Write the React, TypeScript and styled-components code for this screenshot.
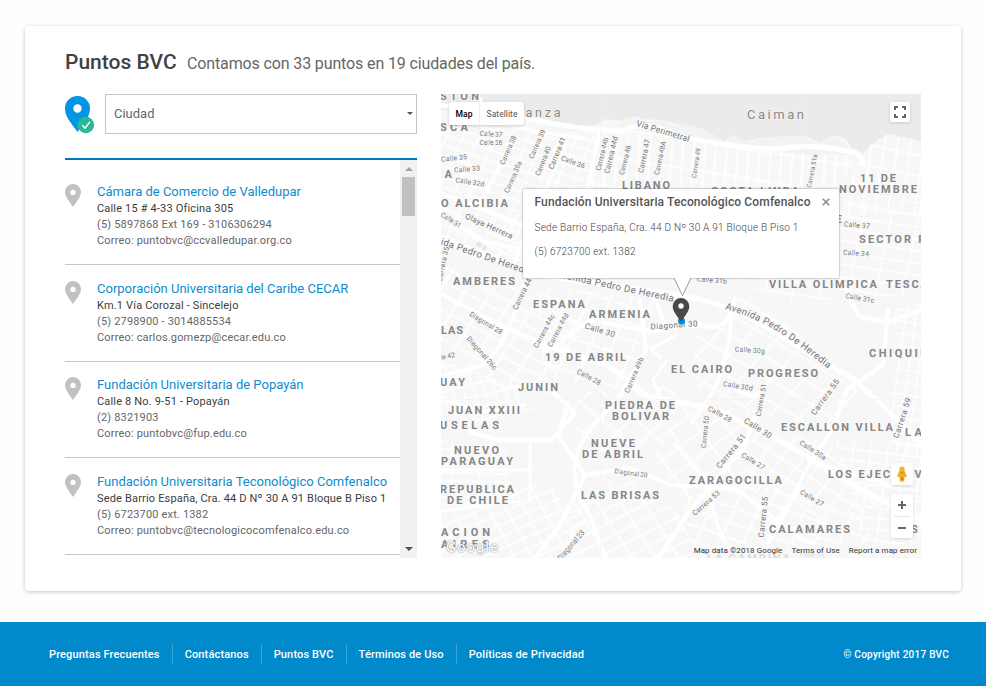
import React from "react";
import styled, { createGlobalStyle } from "styled-components";

const GlobalStyle = createGlobalStyle`
  * { box-sizing: border-box; }
  body { margin: 0; background: #fff; font-family: Roboto, "Liberation Sans", sans-serif; color: #666; }
  h1, h2, h3, p, ul { margin: 0; padding: 0; font-weight: 400; }
  button { font-family: inherit; border: 0; padding: 0; }
`;

const Page = styled.div`
  width: 986px;
  height: 687px;
  overflow: hidden;
  padding-top: 26px;
  background: #fefefe;
`;
const Card = styled.main`
  width: 936px;
  height: 565px;
  margin-left: 25px;
  padding: 22px 40px 0;
  background: #fff;
  border-radius: 4px;
  box-shadow: 0 1px 4px rgba(0, 0, 0, 0.22);
`;
const Heading = styled.header`
  display: flex;
  align-items: baseline;
  height: 46px;
  line-height: 28px;
`;
const Title = styled.h1`
  width: 122px;
  font-size: 21px;
  font-weight: 500;
  color: #414141;
  white-space: nowrap;
`;
const Summary = styled.p`
  font-size: 16px;
  letter-spacing: -0.13px;
`;
const Columns = styled.div`
  display: flex;
  gap: 24px;
`;
const Sidebar = styled.section`
  width: 352px;
`;
const Filter = styled.div`
  display: flex;
  height: 64px;
`;
const FilterPin = styled.div`
  width: 40px;
  padding-top: 2px;
`;
const Select = styled.button`
  display: flex;
  align-items: center;
  justify-content: space-between;
  width: 312px;
  height: 40px;
  padding: 0 3px 1px 8px;
  background: #fff;
  border: 1px solid #c4c4c4;
  font-size: 13px;
  color: #666;
`;
const Caret = styled.span<{ $up?: boolean; $color: string }>`
  width: 0;
  height: 0;
  border-left: 4px solid transparent;
  border-right: 4px solid transparent;
  border-top: ${(p) => (p.$up ? "0" : `4px solid ${p.$color}`)};
  border-bottom: ${(p) => (p.$up ? `4px solid ${p.$color}` : "0")};
`;
const SelectCaret = styled(Caret)`
  border-left-width: 3px;
  border-right-width: 3px;
  border-top-width: 3px;
`;
const ListFrame = styled.div`
  display: flex;
  height: 400px;
  border-top: 2px solid #0078c1;
`;
const List = styled.ul`
  width: 335px;
  padding-top: 8.4px;
  list-style: none;
`;
const Item = styled.li`
  display: flex;
  height: 96.6px;
  padding-top: 14.6px;
  border-bottom: 1px solid #c6c6c6;
`;
const ItemPin = styled.div`
  width: 32px;
  padding-top: 1px;
`;
const ItemBody = styled.div`
  white-space: nowrap;
`;
const ItemName = styled.h2`
  margin-bottom: 1px;
  font-size: 13px;
  line-height: 17px;
  color: #0e8ccd;
`;
const ItemLine = styled.p<{ $strong?: boolean }>`
  font-size: 11px;
  line-height: 16px;
  letter-spacing: 0.17px;
  color: ${(p) => (p.$strong ? "#3c3c3c" : "#666")};
`;
const Track = styled.div`
  display: flex;
  flex-direction: column;
  align-items: center;
  width: 17px;
  padding: 7px 0;
  background: #f1f1f1;
`;
const Thumb = styled.div`
  width: 13px;
  height: 39px;
  margin: 6px 0 auto;
  background: #c1c1c1;
`;

const MapFrame = styled.section`
  position: relative;
  width: 480px;
  height: 464px;
  overflow: hidden;
  background: #f7f7f7;
`;
const MapCanvas = styled.svg`
  display: block;
`;
const MapTypes = styled.div`
  position: absolute;
  top: 8px;
  left: 8px;
  display: flex;
  height: 23px;
  background: #fff;
  border-radius: 2px;
  box-shadow: 0 1px 3px rgba(0, 0, 0, 0.2);
`;
const MapType = styled.button<{ $active?: boolean }>`
  width: ${(p) => (p.$active ? 30 : 45)}px;
  background: none;
  border-left: ${(p) => (p.$active ? "0" : "1px solid #eee")};
  font-size: 8.5px;
  letter-spacing: 0.05px;
  font-weight: ${(p) => (p.$active ? 500 : 400)};
  color: ${(p) => (p.$active ? "#000" : "#555")};
`;
const Control = styled.button<{ $top: number; $left: number; $w: number; $h: number }>`
  position: absolute;
  top: ${(p) => p.$top}px;
  left: ${(p) => p.$left}px;
  width: ${(p) => p.$w}px;
  height: ${(p) => p.$h}px;
  display: flex;
  flex-direction: column;
  align-items: center;
  justify-content: center;
  background: #fff;
  border-radius: 2px;
  box-shadow: 0 1px 3px rgba(0, 0, 0, 0.14);
`;
const InfoWindow = styled.article`
  position: absolute;
  top: 95px;
  left: 82px;
  width: 316px;
  height: 89px;
  padding: 5px 9px 5px 11.500px;
  background: #fff;
  box-shadow: 0 0 2px rgba(0, 0, 0, 0.55);
  border-radius: 1px;
`;
const InfoHead = styled.div`
  display: flex;
  justify-content: space-between;
  align-items: center;
  margin-bottom: 11px;
`;
const InfoTitle = styled.h3`
  font-size: 12px;
  line-height: 16px;
  font-weight: 500;
  letter-spacing: 0.14px;
  color: #555;
  white-space: nowrap;
`;
const InfoText = styled.p`
  margin-bottom: 10px;
  font-size: 10px;
  line-height: 14px;
  font-weight: 300;
  letter-spacing: 0.25px;
  color: #444;
  white-space: nowrap;
`;
const GoogleMark = styled.div`
  position: absolute;
  left: 5px;
  bottom: 1px;
  font-size: 15px;
  line-height: 20px;
  font-weight: 400;
  letter-spacing: 0.9px;
  color: #fff;
  text-shadow: 0 0 1px #888, 0 0 2px #aaa;
`;
const MapCredits = styled.div`
  position: absolute;
  right: 0;
  bottom: 0;
  display: flex;
  gap: 9px;
  height: 14px;
  padding: 0 4px;
  background: rgba(247, 247, 247, 0.75);
  font-size: 8px;
  line-height: 14px;
  letter-spacing: 0.08px;
  color: #333;
  white-space: nowrap;
`;

const Footer = styled.footer`
  display: flex;
  align-items: center;
  justify-content: space-between;
  height: 64px;
  margin-top: 31px;
  padding: 0 37px;
  background: #008acb;
  color: #fff;
  font-weight: 500;
`;
const FooterNav = styled.nav`
  display: flex;
`;
const FooterLink = styled.a`
  height: 20px;
  padding: 0 12px;
  font-size: 11px;
  line-height: 21px;
  letter-spacing: 0.14px;
  border-left: 1px solid #35a2d6;
  &:first-child { border-left: 0; }
`;
const Copyright = styled.span`
  font-size: 10px;
  letter-spacing: 0.25px;
`;

const places = [
  ["Cámara de Comercio de Valledupar", "Calle 15 # 4-33 Oficina 305", "(5) 5897868 Ext 169 - 3106306294", "Correo: puntobvc@ccvalledupar.org.co"],
  ["Corporación Universitaria del Caribe CECAR", "Km.1 Vía Corozal - Sincelejo", "(5) 2798900 - 3014885534", "Correo: carlos.gomezp@cecar.edu.co"],
  ["Fundación Universitaria de Popayán", "Calle 8 No. 9-51 - Popayán", "(2) 8321903", "Correo: puntobvc@fup.edu.co"],
  ["Fundación Universitaria Teconológico Comfenalco", "Sede Barrio España, Cra. 44 D Nº 30 A 91 Bloque B Piso 1", "(5) 6723700 ext. 1382", "Correo: puntobvc@tecnologicocomfenalco.edu.co"],
];

/* Neighbourhood names: text, left, right, baseline. */
const hoods: [string, number, number, number][] = [
  ["STON", 440, 479, 100], ["SCA", 440, 468, 131], ["ZA", 434, 452, 178],
  ["LIBANO", 622, 670, 189], ["COSTA LINDA", 711, 799, 195],
  ["11 DE", 860, 896, 182], ["NOVIEMBRE", 839, 917, 193], ["O ALCIBIA", 441, 508, 207],
  ["AMBERES", 453, 515, 285], ["ESPANA", 533, 585, 308], ["ARMENIA", 589, 650, 318],
  ["SECTOR RO", 859, 935, 243], ["VILLA OLIMPICA", 769, 877, 288], ["TESCA", 886, 928, 288],
  ["LAS", 441, 463, 334], ["19 DE ABRIL", 545, 626, 361], ["UAY", 440, 465, 386],
  ["JUNIN", 518, 558, 391], ["JUAN XXIII", 448, 520, 414], ["USELAS", 440, 499, 429],
  ["PIEDRA DE", 605, 675, 409], ["BOLIVAR", 612, 669, 420], ["EL CAIRO", 671, 732, 373],
  ["PROGRESO", 748, 818, 377], ["CHIQUINQ", 869, 938, 357], ["ESCALLON VILLA", 781, 893, 431],
  ["LA", 905, 922, 436], ["NUEVO", 454, 499, 454], ["PARAGUAY", 441, 513, 465],
  ["REPUBLICA", 440, 514, 493], ["DE CHILE", 447, 508, 504], ["NUEVE", 591, 635, 447],
  ["DE ABRIL", 582, 643, 458], ["LAS BRISAS", 581, 659, 499], ["ZARAGOCILLA", 689, 782, 484],
  ["LOS EJEC", 828, 890, 478], ["V", 914, 922, 478], ["CALAMARES", 769, 850, 533],
  ["S", 911, 918, 533], ["ACION", 441, 490, 536], ["AIRES", 441, 489, 548],
  ["LA CAMPINA", 707, 790, 562], ["E", 835, 842, 223],
];

/* Street names: text, centre x, centre y, length, angle, font size. */
const streets: [string, number, number, number, number, number][] = [
  ["Calle 37", 491, 134, 23, 3, 7], ["Calle 36", 491, 143, 23, 0, 7], ["Calle 35", 454, 158, 26, -6, 7],
  ["Calle 33", 467, 169, 26, -5, 7], ["Calle 32d", 470, 182, 29, 9, 7],
  ["Carrera 38", 508, 150, 31, -66, 7], ["Carrera 39", 537, 144, 31, -66, 7],
  ["Carrera 40", 543, 161, 31, -68, 7], ["Carrera 39a", 513, 177, 34, -66, 7],
  ["Carrera 41", 557, 153, 34, -68, 7.5], ["Calle 36", 573, 162, 25, 20, 7],
  ["Carrera 44b", 602, 154, 34, -76, 7], ["Carrera 44d", 611, 155, 38, -76, 7.5],
  ["Carrera 46", 625, 160, 30, -76, 7], ["Carrera 47", 644, 156, 34, -78, 7.5],
  ["Carrera 48A", 660, 158, 34, -78, 7], ["Vía Perimetral", 663, 131, 55, 17, 8.5],
  ["Carrera 49", 696, 163, 30, -81, 6.5], ["Carrera 51a", 812, 171, 34, -79, 6.5],
  ["Calle 31", 451, 220, 23, 32, 7], ["Olaya Herrera", 489, 226, 51, 24, 8],
  ["Avenida Pedro De Heredia", 476, 253, 118, 19, 9.5], ["Carrera 35", 443, 264, 35, -78, 7],
  ["Avenida Pedro De Heredia", 615, 286, 120, 12, 9.5], ["Carrera 44", 522, 294, 34, -64, 7.5],
  ["Calle 37", 857, 225, 26, 5, 7], ["Calle 34", 856, 253, 26, 3, 7],
  ["Calle 31b", 712, 280, 30, 5, 7], ["Calle 31c", 860, 298, 29, 10, 7],
  ["Diagonal 28", 486, 323, 37, 31, 7], ["Diagonal 26c", 482, 353, 42, 49, 7],
  ["Carrera 44c", 544, 331, 37, -62, 7], ["Carrera 44d", 558, 330, 37, -62, 7],
  ["Calle 30", 600, 330, 31, 17, 8], ["Calle 42", 443, 357, 24, -11, 7],
  ["Calle 28", 589, 377, 26, 28, 7], ["Carrera 49b", 634, 375, 38, -67, 7],
  ["Diagonal 30", 674, 325, 47, -4, 8], ["Calle 30g", 750, 350, 30, 4, 7],
  ["Calle 30d", 738, 386, 30, 9, 7], ["Carrera 51", 761, 400, 33, -80, 7],
  ["Calle 28", 720, 414, 26, 28, 7], ["Calle 30", 758, 428, 31, 32, 8],
  ["Carrera 55", 825, 397, 42, -54, 8], ["Carrera 59", 902, 418, 42, -72, 8],
  ["Carrera 50", 705, 432, 32, -84, 7], ["Carrera 51", 731, 451, 42, -51, 8],
  ["Calle 27", 753, 461, 26, 32, 7], ["Calle 30a", 813, 450, 30, 33, 7],
  ["Calle 27", 812, 498, 26, 31, 7], ["Carrera 53", 706, 503, 34, -41, 7],
  ["Carrera 55", 763, 517, 41, -84, 8], ["Diagonal 20", 631, 473, 33, 8, 6.5],
  ["Diagonal 23", 571, 545, 37, -49, 7.5], ["Calle 25", 812, 555, 25, 7, 7],
];

/* Street meshes: area, angle, skew, block width, block height, line width. */
const meshes: [string, number, number, number, number, number][] = [
  ["441,130 480,112 530,128 600,138 590,190 530,270 441,190", 18, -6, 15, 10, 2.2],
  ["590,139 650,128 700,143 820,155 858,155 840,186 590,190", 9, 5, 11, 29, 2.6],
  ["862,150 885,135 921,140 921,215 840,215", 12, 4, 13, 20, 2.4],
  ["838,205 921,200 921,295 780,302 735,278 838,276", 8, -4, 27, 12, 2],
  ["441,205 525,215 525,270 441,246", 25, 0, 18, 15, 2.4],
  ["441,260 530,285 590,315 552,382 505,390 441,350", 28, -5, 22, 13, 2.4],
  ["535,285 655,299 650,350 622,390 545,380", 18, -5, 20, 16, 2.4],
  ["441,360 505,383 535,410 470,425 441,410", -13, 5, 10, 12, 2.2],
  ["692,340 745,290 860,385 835,430 700,400", 31, -12, 24, 18, 2.4],
  ["895,310 921,300 921,460 890,450", 8, 0, 10, 12, 2],
  ["441,440 512,452 516,500 441,510", 1, 0, 27, 8, 2],
  ["485,490 545,483 590,520 560,558 441,558 441,520", -24, 4, 16, 11, 2.2],
  ["570,500 625,475 680,515 700,558 570,558", -27, 5, 20, 13, 2.4],
  ["680,405 760,412 745,495 685,500 650,458", -36, 0, 24, 19, 2.6],
  ["755,430 825,440 885,506 810,525 742,485", 33, -4, 17, 14, 2.3],
  ["682,500 740,480 860,514 880,558 690,558", 19, -5, 22, 15, 2.4],
  ["835,440 921,445 921,558 865,550", 7, 0, 17, 11, 2],
  ["590,390 680,385 676,445 600,455 560,410", 40, -5, 24, 22, 2.4],
];

/* Main roads: path, stroke width. */
const roads: [string, number][] = [
  ["M441 105L481 114L532 119Q575 130 622 131Q647 118 681 137Q744 149 776 149Q812 143 846 151Q862 151 863 164", 5],
  ["M480 98L489 120L541 132L584 139", 3],
  ["M441 237Q493 259 550 277L671 294Q730 302 770 330L850 377Q885 405 921 445", 5],
  ["M441 193L525 225L541 236M441 215L486 242L525 250", 4],
  ["M516 138L492 181L479 205M567 142L532 218L514 264M600 130L584 205", 3.5],
  ["M441 294L500 325L552 347L591 320L650 332L700 323", 4],
  ["M530 278L501 344L484 365L441 376", 4],
  ["M652 291L665 325L715 327Q731 322 735 299M731 320Q730 355 714 390L692 423", 4],
  ["M552 347L607 365L650 397L711 408L781 441L862 490L921 520", 5],
  ["M640 300L646 350L618 398L590 430Q559 470 590 515L605 558", 4],
  ["M504 388L546 386L575 413L552 440L497 440L470 432", 4],
  ["M441 398L480 412L524 405M568 403L558 436L585 475L559 527L535 558", 4],
  ["M585 475L630 468L671 485L735 488L802 540L862 558", 4],
  ["M667 360L653 380L660 396M661 358L651 349L676 335", 3],
  ["M888 310L883 365L847 390L832 430L806 470L790 503L760 558", 4],
  ["M841 280L859 317L888 322L921 310", 4],
  ["M736 390L764 400L742 450L691 509L658 558", 4.5],
  ["M675 445L706 480L718 527L734 558M758 427L821 465L890 485", 3.5],
  ["M530 440L530 500M441 470L532 470M441 511L520 501", 3],
];

function LocationPin({ w, h, color }: { w: number; h: number; color: string }) {
  return (
    <svg width={w} height={h} viewBox="0 0 16 23" preserveAspectRatio="none" display="block">
      <path fillRule="evenodd" fill={color} d="M8 0a8 8 0 0 1 8 8.1c0 4.8-4.3 9.4-8 14.9C4.3 17.5 0 12.9 0 8.1A8 8 0 0 1 8 0Zm0 5.7a2.7 2.7 0 1 0 0 5.4 2.7 2.7 0 0 0 0-5.4Z" />
    </svg>
  );
}

function CheckedPin() {
  return (
    <svg width="30" height="38" viewBox="0 0 30 38" display="block">
      <path fillRule="evenodd" fill="#0095e5" d="M12.5 0A12.4 12.4 0 0 1 25 12.7C25 21 18 28 12.5 36 7 28 0 21 0 12.7A12.4 12.4 0 0 1 12.5 0Zm0 8.3a4.2 4.2 0 1 0 0 8.4 4.2 4.2 0 0 0 0-8.4Z" />
      <circle cx="20.8" cy="29" r="8.3" fill="#27b99a" />
      <path d="M17.3 29.3l2.7 2.8 5-6.4" fill="none" stroke="#fff" strokeWidth="1.4" />
    </svg>
  );
}

function StreetMap() {
  return (
    <MapCanvas width="480" height="464" viewBox="441 94 480 464" fontFamily="Roboto, sans-serif">
      <defs>
        {meshes.map(([, angle, skew, w, h, line], i) => (
          <pattern key={i} id={`mesh${i}`} width={w} height={h} patternUnits="userSpaceOnUse" patternTransform={`rotate(${angle}) skewX(${skew})`}>
            <path d={`M0 ${line / 2}H${w}M${line / 2} 0V${h}`} stroke="#fff" strokeWidth={line} />
          </pattern>
        ))}
        <path id="heredia" d="M725 309Q748 315 772 328Q800 345 832 372" />
      </defs>
      <path fill="#ebebeb" d="M441 94H921V141L890 134L879 139L866 150L858 157L852 149Q844 132 829 137L821 143L805 136L760 138L744 142L731 137L725 142Q706 128 681 125L662 120L643 119L635 116L625 121L605 119Q588 131 576 131Q549 126 519 112L441 110Z" />
      <path fill="#f3f3f3" d="M618 126Q621 118 632 117Q647 124 661 120Q678 130 685 124Q704 127 725 142Q730 132 738 137Q747 147 761 139Q785 134 805 138Q813 146 821 142Q832 131 845 143L855 155L780 153L690 143Z" />
      <path fill="#e2e2e2" d="M478 240L489 242L484 251L476 245Z" />
      <g opacity="0.85">
        {meshes.map(([points], i) => <polygon key={i} points={points} fill={`url(#mesh${i})`} />)}
      </g>
      <g fill="none" stroke="#fff" strokeLinejoin="round" strokeLinecap="round">
        {roads.map(([d, w], i) => <path key={i} d={d} strokeWidth={w} />)}
      </g>
      <path d="M600.5 94V558M805.5 94V558M441 399.5H921M441 194.5H921" stroke="#f1f1f1" strokeWidth="0.6" />
      <g textAnchor="middle" stroke="#f8f8f8" strokeWidth="2" paintOrder="stroke" strokeLinejoin="round">
        <g fill="#737373">
          {streets.map(([text, x, y, length, angle, size], i) => (
            <text key={i} transform={`translate(${x} ${y}) rotate(${angle})`} y={size * 0.35} fontSize={size} textLength={length}>{text}</text>
          ))}
          <text fontSize="9.5" textAnchor="start" letterSpacing="0.45"><textPath href="#heredia">Avenida Pedro De Heredia</textPath></text>
        </g>
        <g fill="#868686" fontSize="11" fontWeight="700">
          {hoods.map(([text, left, right, base], i) => (
            <text key={i} x={(left + right) / 2} y={base} textLength={right - left}>{text}</text>
          ))}
        </g>
        <g fill="#888" stroke="#f1f1f1" fontSize="13">
          <text x="543" y="117" fontSize="12.5" textLength="35">anza</text>
          <text x="775.500" y="118.500" textLength="57">Caiman</text>
        </g>
      </g>
    </MapCanvas>
  );
}

const Marker = styled.svg`
  position: absolute;
  top: 183px;
  left: 228px;
`;

export default function App() {
  return (
    <>
      <GlobalStyle />
      <Page>
        <Card>
          <Heading>
            <Title>Puntos BVC</Title>
            <Summary>Contamos con 33 puntos en 19 ciudades del país.</Summary>
          </Heading>
          <Columns>
            <Sidebar>
              <Filter>
                <FilterPin><CheckedPin /></FilterPin>
                <Select>Ciudad<SelectCaret $color="#555" /></Select>
              </Filter>
              <ListFrame>
                <List>
                  {places.map(([name, address, phone, mail]) => (
                    <Item key={name}>
                      <ItemPin><LocationPin w={16} h={23} color="#c1c1c1" /></ItemPin>
                      <ItemBody>
                        <ItemName>{name}</ItemName>
                        <ItemLine $strong>{address}</ItemLine>
                        <ItemLine>{phone}</ItemLine>
                        <ItemLine>{mail}</ItemLine>
                      </ItemBody>
                    </Item>
                  ))}
                </List>
                <Track>
                  <Caret $up $color="#a3a3a3" />
                  <Thumb />
                  <Caret $color="#505050" />
                </Track>
              </ListFrame>
            </Sidebar>
            <MapFrame>
              <StreetMap />
              <MapTypes>
                <MapType $active>Map</MapType>
                <MapType>Satellite</MapType>
              </MapTypes>
              <Control $top={8} $left={449} $w={20} $h={20} aria-label="Fullscreen">
                <svg width="12" height="12" viewBox="0 0 12 12" fill="none" stroke="#666" strokeWidth="2">
                  <path d="M1 4V1h3M8 1h3v3M11 8v3H8M4 11H1V8" />
                </svg>
              </Control>
              <InfoWindow>
                <InfoHead>
                  <InfoTitle>Fundación Universitaria Teconológico Comfenalco</InfoTitle>
                  <svg width="8" height="8" viewBox="0 0 8 8" stroke="#888" strokeWidth="1.5"><path d="M.7.7l6.6 6.6M7.3.7L.7 7.3" /></svg>
                </InfoHead>
                <InfoText>Sede Barrio España, Cra. 44 D Nº 30 A 91 Bloque B Piso 1</InfoText>
                <InfoText>(5) 6723700 ext. 1382</InfoText>
              </InfoWindow>
              <Marker width="28" height="48" viewBox="0 0 28 48">
                <path d="M5 0h17l-8.500 19Z" fill="#fff" />
                <path d="M5 1l8.500 17.500L22 1" fill="none" stroke="#999" strokeWidth="1" />
                <circle cx="12.500" cy="44" r="3.600" fill="#0095d9" />
                <path fill="#484848" d="M12 21a8.300 8.300 0 0 1 8.300 8.300c0 5-4.600 10-8.300 15.700-3.700-5.700-8.300-10.700-8.300-15.700A8.300 8.300 0 0 1 12 21Z" />
                <circle cx="12" cy="29" r="2.700" fill="#fff" />
              </Marker>
              <Control $top={369} $left={450} $w={22} $h={22} aria-label="Street View">
                <svg width="12" height="17" viewBox="0 0 12 17">
                  <ellipse cx="6" cy="15.500" rx="3" ry="1" fill="#ddd" />
                  <path fill="#efad24" d="M3.300 5h5.400L11 10.500 8.600 11 8 15H4l-.6-4L1 10.500Z" />
                  <circle cx="6" cy="3.200" r="2.700" fill="#f5b32c" />
                  <path d="M4.200 5.500L6 7l1.800-1.500M5 14l1-3 1 3" stroke="#cf7d20" fill="none" />
                </svg>
              </Control>
              <Control $top={400} $left={450} $w={22} $h={44} aria-label="Zoom">
                <svg width="22" height="44" viewBox="0 0 22 44" stroke="#666" strokeWidth="2">
                  <path d="M7 11h8M11 7v8M7 34h8" />
                  <path d="M3 22.500h16" stroke="#e6e6e6" strokeWidth="1" />
                </svg>
              </Control>
              <GoogleMark>Google</GoogleMark>
              <MapCredits>
                <span>Map data ©2018 Google</span>
                <span>Terms of Use</span>
                <span>Report a map error</span>
              </MapCredits>
            </MapFrame>
          </Columns>
        </Card>
        <Footer>
          <FooterNav>
            <FooterLink>Preguntas Frecuentes</FooterLink>
            <FooterLink>Contáctanos</FooterLink>
            <FooterLink>Puntos BVC</FooterLink>
            <FooterLink>Términos de Uso</FooterLink>
            <FooterLink>Políticas de Privacidad</FooterLink>
          </FooterNav>
          <Copyright>© Copyright 2017 BVC</Copyright>
        </Footer>
      </Page>
    </>
  );
}
